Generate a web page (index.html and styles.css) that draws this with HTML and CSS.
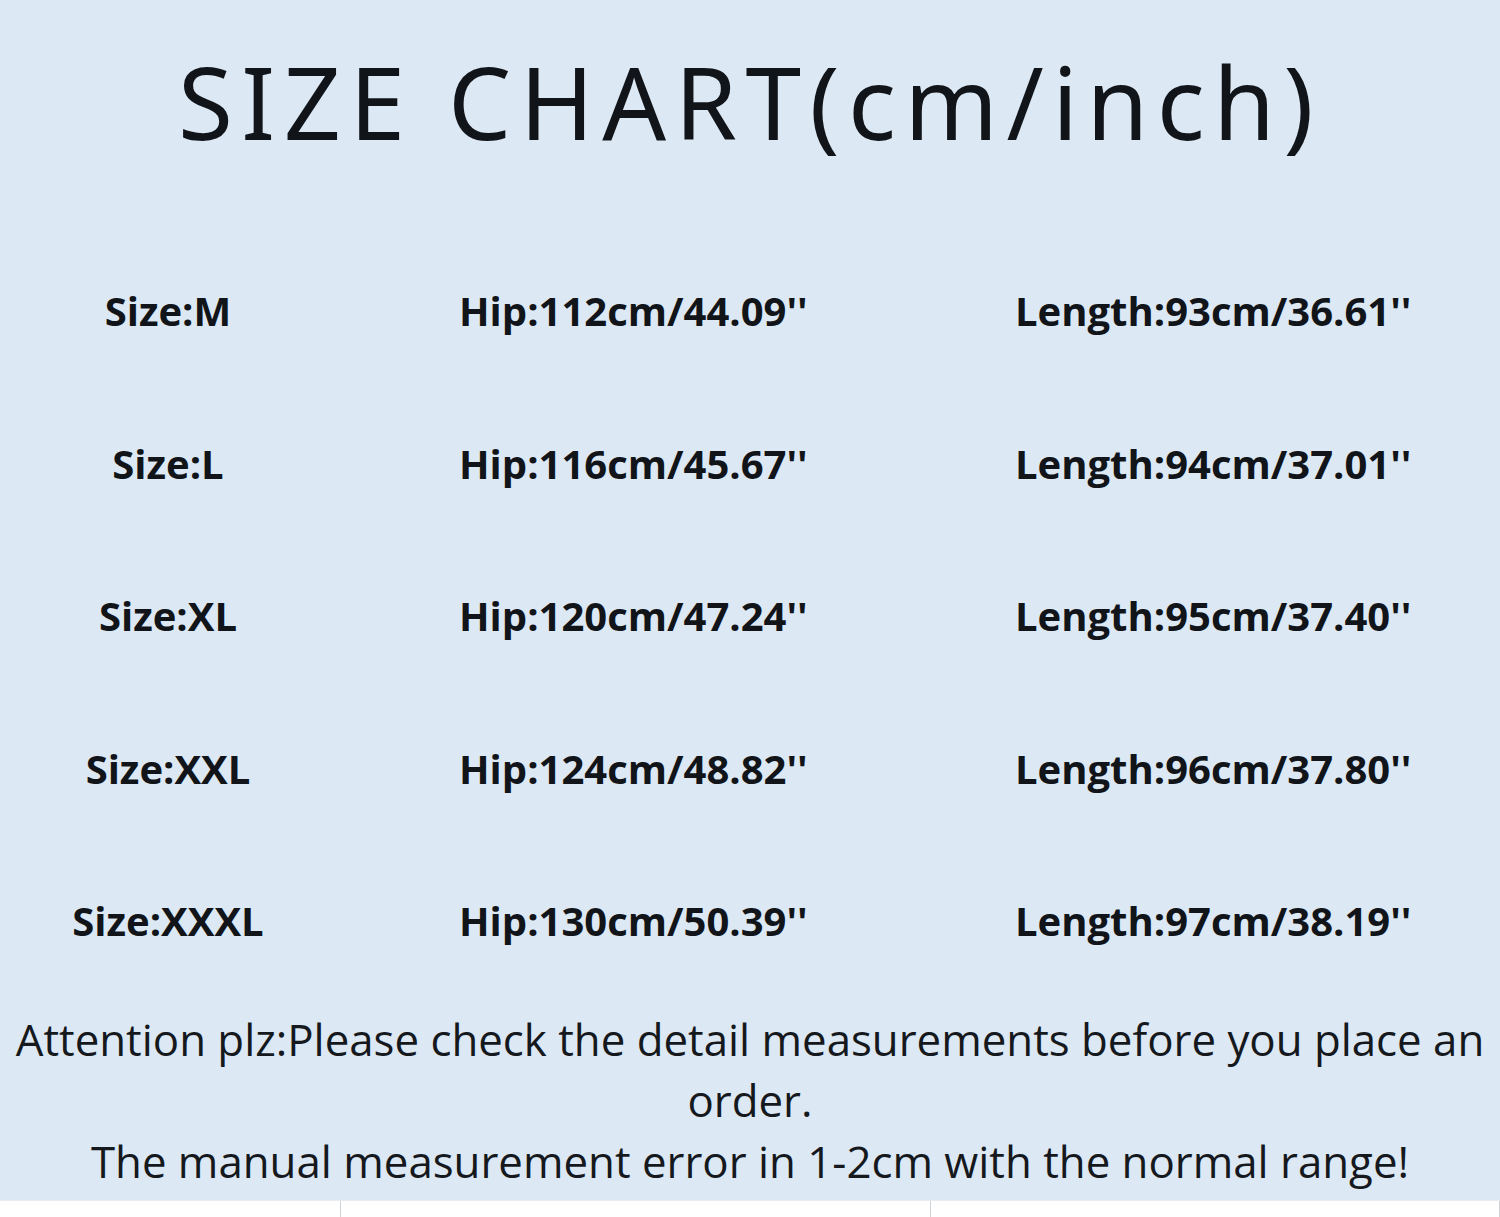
FILE: index.html
```html
<!DOCTYPE html>
<html>
<head>
<meta charset="utf-8">
<link rel="stylesheet" href="styles.css">
</head>
<body>
<div class="page">
  <div class="chart">
    <h1 class="title">SIZE CHART(cm/inch)</h1>
    <div class="rows">
      <div class="c1">Size:M</div><div class="c2">Hip:112cm/44.09''</div><div class="c3">Length:93cm/36.61''</div>
      <div class="c1">Size:L</div><div class="c2">Hip:116cm/45.67''</div><div class="c3">Length:94cm/37.01''</div>
      <div class="c1">Size:XL</div><div class="c2">Hip:120cm/47.24''</div><div class="c3">Length:95cm/37.40''</div>
      <div class="c1">Size:XXL</div><div class="c2">Hip:124cm/48.82''</div><div class="c3">Length:96cm/37.80''</div>
      <div class="c1">Size:XXXL</div><div class="c2">Hip:130cm/50.39''</div><div class="c3">Length:97cm/38.19''</div>
    </div>
    <div class="note">
      <p>Attention plz:Please check the detail measurements before you place an order.</p>
      <p>The manual measurement error in 1-2cm with the normal range!</p>
    </div>
  </div>
  <div class="strip">
    <div class="cell a"></div>
    <div class="cell b"></div>
    <div class="cell c"></div>
  </div>
</div>
</body>
</html>
```
FILE: styles.css
```css
html, body {
  margin: 0;
  padding: 0;
  background: #ffffff;
}
.page {
  width: 1500px;
  height: 1217px;
  display: flex;
  flex-direction: column;
  overflow: hidden;
}
.chart {
  height: 1200px;
  background: #dce8f4;
  display: flex;
  flex-direction: column;
  color: #111418;
}
.title {
  margin: 0;
  padding-top: 36px;
  height: 150px;
  font-family: "Noto Sans", sans-serif;
  font-weight: 400;
  font-size: 100px;
  line-height: 130px;
  text-align: center;
  letter-spacing: 8.5px;
  box-sizing: border-box;
}
.rows {
  margin-top: 133px;
  display: grid;
  grid-template-columns: 336px 679px 1fr;
  grid-auto-rows: 152.5px;
  font-family: "Open Sans", sans-serif;
  font-weight: 700;
  font-size: 40px;
  line-height: 56px;
}
.c1 { text-align: center; }
.c2 { padding-left: 123px; }
.c3 { padding-left: 0; }
.note {
  margin-top: -37px;
  font-family: "Open Sans", sans-serif;
  font-weight: 400;
  font-size: 43.8px;
  line-height: 61px;
  text-align: center;
  color: #15181c;
}
.note p { margin: 0; }
.strip {
  flex: 1;
  display: flex;
  border-top: 1px solid #e8ecf0;
  background: #ffffff;
}
.cell { height: 100%; }
.a { width: 340px; border-right: 1px solid #cfd3d8; }
.b { width: 589px; border-right: 1px solid #cfd3d8; }
.c { flex: 1; border-right: 1px solid #cfd3d8; }
```
